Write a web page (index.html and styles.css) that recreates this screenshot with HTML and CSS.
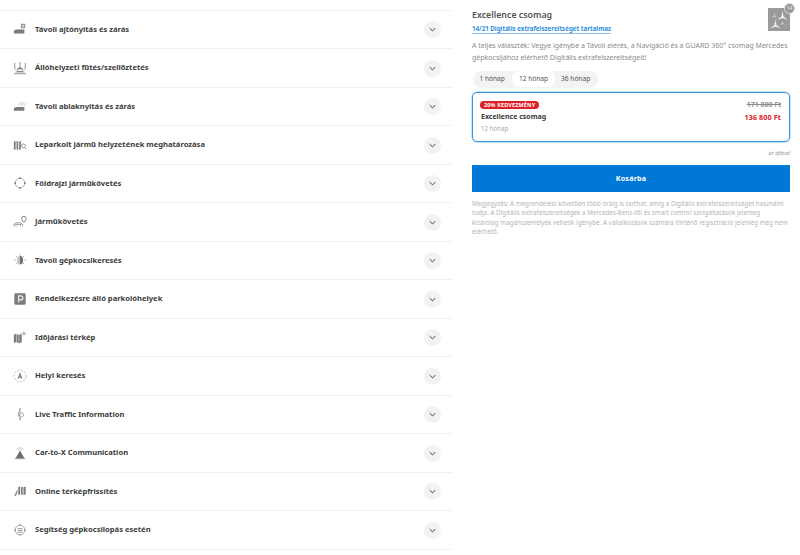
FILE: index.html
```html
<!DOCTYPE html>
<html lang="hu">
<head>
<meta charset="utf-8">
<title>Excellence csomag</title>
<link rel="stylesheet" href="styles.css">
</head>
<body>
<svg class="defs" width="0" height="0">
  <symbol id="chev" viewBox="0 0 10 6"><path d="M1 1l4 4 4-4" fill="none" stroke="#333" stroke-width="1.3"/></symbol>
  <symbol id="i1" viewBox="0 0 16 16"><path d="M1 13.500V10.500C1 9.500 2 9 4 8.500H13V13H2z" fill="#666"/><rect x="9" y="2" width="5" height="5" fill="#888"/><rect x="10.500" y="3.500" width="2" height="2" fill="#ddd"/></symbol>
  <symbol id="i2" viewBox="0 0 16 16"><g fill="none" stroke="#666" stroke-width=".9"><path d="M2 2v8M8 1v6M14 2v8M1 14.500h14M3 12.500h10M5 9h6v3H5z"/></g><path d="M5 9l2-2h2l2 2z" fill="#666"/></symbol>
  <symbol id="i3" viewBox="0 0 16 16"><path d="M1 14v-3c0-1 1-1.500 3-2h9v4.500H2z" fill="#666"/><path d="M6 7l5-4M9 8l4-4M12 8l3-3" stroke="#aaa" fill="none"/></symbol>
  <symbol id="i4" viewBox="0 0 16 16"><path d="M1 4l2-.5V13l-2 .5zM4 3.500l2 .5v9.500l-2-.5zM7 4l2-.5V13l-2 .5z" fill="#666"/><circle cx="12" cy="9" r="2.200" fill="none" stroke="#777"/><path d="M13.500 11l2 2" stroke="#777"/></symbol>
  <symbol id="i5" viewBox="0 0 16 16"><circle cx="8" cy="8" r="5.500" fill="none" stroke="#999"/><g fill="#555"><circle cx="8" cy="2.500" r="1"/><circle cx="8" cy="13.500" r="1"/><circle cx="2.500" cy="8" r="1"/><circle cx="13.500" cy="8" r="1"/></g></symbol>
  <symbol id="i6" viewBox="0 0 16 16"><path d="M1 13v-2l2-2h6l2 2v2M3 13h1M8 13h1M2 11h8" fill="none" stroke="#777"/><path d="M12.500 1.500a2.500 2.500 0 0 1 2.500 2.500c0 2-2.500 4.500-2.500 4.500S10 6 10 4a2.500 2.500 0 0 1 2.500-2.500z" fill="none" stroke="#666" stroke-width="1.100"/></symbol>
  <symbol id="i7" viewBox="0 0 16 16"><path d="M8 3.500a3.500 5 0 0 1 3.500 5c0 3-1.500 4.500-3.500 4.500z" fill="#555"/><path d="M8 3.500a3.500 5 0 0 0-3.500 5c0 3 1.500 4.500 3.500 4.500" fill="#bbb"/><path d="M8 1v2M1 8h2.500M13 8h2.500M3 3l2 2M13 3l-2 2M3 13l2-2M13 13l-2-2" stroke="#999"/></symbol>
  <symbol id="i8" viewBox="0 0 16 16"><rect x="1.500" y="1.500" width="13" height="13" rx="1.500" fill="#666"/><path d="M6.500 12V4.500H9a2 2 0 0 1 0 4.500H6.500" fill="none" stroke="#eee" stroke-width="1.300"/></symbol>
  <symbol id="i9" viewBox="0 0 16 16"><path d="M1 5l2.500-.5V14L1 14.500zM4 4.500l2.500 1V15L4 14zM7 5.500l3-1V14l-3 1z" fill="#666"/><circle cx="12.500" cy="4" r="1.500" fill="#999"/><path d="M12.500 .5v1.500M12.500 6v1.500M9 4h1.500M14.500 4H16M10 1.500l1 1M15 1.500l-1 1M10 6.500l1-1M15 6.500l-1-1" stroke="#bbb" stroke-width=".7"/></symbol>
  <symbol id="i10" viewBox="0 0 16 16"><circle cx="8" cy="8" r="6.800" fill="none" stroke="#aaa" stroke-dasharray="2.500 1.500"/><path d="M8 3.500l3 8-3-1.500-3 1.500z" fill="#777"/></symbol>
  <symbol id="i11" viewBox="0 0 16 16"><path d="M8.500 1c-.5 3-2.500 5-2.500 8a3 3 0 0 0 5 2 2.500 2.500 0 0 0-3-4c-1.500.8-1 3 .5 3" fill="none" stroke="#888" stroke-width="1"/><path d="M8 1v14" stroke="#888" stroke-width=".8"/><path d="M7 13l2 2" stroke="#666"/></symbol>
  <symbol id="i12" viewBox="0 0 16 16"><path d="M8 5l5 9H3z" fill="#555"/><path d="M4 4a5 5 0 0 1 8 0M6 5a2.500 2.500 0 0 1 4 0" stroke="#aaa" fill="none" stroke-width=".8"/><rect x="2" y="14" width="12" height="1" fill="#777"/></symbol>
  <symbol id="i13" viewBox="0 0 16 16"><path d="M6 3.500l2-.5v9l-2 .5zM9 3l2 .5v9l-2-.5zM12 3.500l2.500-.5v9l-2.500.5z" fill="#666"/><path d="M5 6l-2 4-1.500 3.500L3 14l2-4z" fill="#777"/></symbol>
  <symbol id="i14" viewBox="0 0 16 16"><circle cx="8" cy="8" r="5.500" fill="none" stroke="#888"/><path d="M1 8h2M13 8h2M8 1v1.500M8 13.500V15M5 6.500h6M6 8.500h5M5 10.500h6" stroke="#777" fill="none"/></symbol>
  <symbol id="star" viewBox="0 0 22 23">
    <path d="M14.500 3L15.500 8.500 20 12 14.500 10 9 12 13.500 8.500z" fill="#f4f4f4"/>
    <path d="M7.500 11.500L8.500 17 13 20.500 7.500 18.500 2 20.500 6.500 17z" fill="#f4f4f4"/>
    <path d="M6.500 5L7 7.800 9.300 9.500 6.500 8.500 3.700 9.500 6 7.800z" fill="#ddd"/>
    <path d="M14.500 12.500L15 15.300 17.300 17 14.500 16 11.700 17 14 15.300z" fill="#ddd"/>
  </symbol>
</svg>
<main class="page">
  <ul class="list">
    <li class="row"><svg class="ico"><use href="#i1"/></svg><span class="label">Távoli ajtónyitás és zárás</span><span class="toggle"><svg class="chev"><use href="#chev"/></svg></span></li>
    <li class="row"><svg class="ico"><use href="#i2"/></svg><span class="label">Állóhelyzeti fűtés/szellőztetés</span><span class="toggle"><svg class="chev"><use href="#chev"/></svg></span></li>
    <li class="row"><svg class="ico"><use href="#i3"/></svg><span class="label">Távoli ablaknyitás és zárás</span><span class="toggle"><svg class="chev"><use href="#chev"/></svg></span></li>
    <li class="row"><svg class="ico"><use href="#i4"/></svg><span class="label">Leparkolt jármű helyzetének meghatározása</span><span class="toggle"><svg class="chev"><use href="#chev"/></svg></span></li>
    <li class="row"><svg class="ico"><use href="#i5"/></svg><span class="label">Földrajzi járműkövetés</span><span class="toggle"><svg class="chev"><use href="#chev"/></svg></span></li>
    <li class="row"><svg class="ico"><use href="#i6"/></svg><span class="label">Járműkövetés</span><span class="toggle"><svg class="chev"><use href="#chev"/></svg></span></li>
    <li class="row"><svg class="ico"><use href="#i7"/></svg><span class="label">Távoli gépkocsikeresés</span><span class="toggle"><svg class="chev"><use href="#chev"/></svg></span></li>
    <li class="row"><svg class="ico"><use href="#i8"/></svg><span class="label">Rendelkezésre álló parkolóhelyek</span><span class="toggle"><svg class="chev"><use href="#chev"/></svg></span></li>
    <li class="row"><svg class="ico"><use href="#i9"/></svg><span class="label">Időjárási térkép</span><span class="toggle"><svg class="chev"><use href="#chev"/></svg></span></li>
    <li class="row"><svg class="ico"><use href="#i10"/></svg><span class="label">Helyi keresés</span><span class="toggle"><svg class="chev"><use href="#chev"/></svg></span></li>
    <li class="row"><svg class="ico"><use href="#i11"/></svg><span class="label">Live Traffic Information</span><span class="toggle"><svg class="chev"><use href="#chev"/></svg></span></li>
    <li class="row"><svg class="ico"><use href="#i12"/></svg><span class="label">Car-to-X Communication</span><span class="toggle"><svg class="chev"><use href="#chev"/></svg></span></li>
    <li class="row"><svg class="ico"><use href="#i13"/></svg><span class="label">Online térképfrissítés</span><span class="toggle"><svg class="chev"><use href="#chev"/></svg></span></li>
    <li class="row"><svg class="ico"><use href="#i14"/></svg><span class="label">Segítség gépkocsilopás esetén</span><span class="toggle"><svg class="chev"><use href="#chev"/></svg></span></li>
  </ul>
  <aside class="side">
    <header class="head">
      <div>
        <h1 class="title">Excellence csomag</h1>
        <a class="link">14/21 Digitális extrafelszereltséget tartalmaz</a>
      </div>
      <div class="logo"><svg class="star"><use href="#star"/></svg><span class="count">14</span></div>
    </header>
    <p class="intro">A teljes választék: Vegye igénybe a Távoli elérés, a Navigáció és a GUARD 360° csomag Mercedes gépkocsijához elérhető Digitális extrafelszereltségeit!</p>
    <div class="tabs"><span class="tab">1 hónap</span><span class="tab on">12 hónap</span><span class="tab">36 hónap</span></div>
    <section class="card">
      <div class="card-row"><span class="badge">20% KEDVEZMÉNY</span><s class="old">171 000 Ft</s></div>
      <div class="card-row"><strong class="name">Excellence csomag</strong><strong class="price">136 800 Ft</strong></div>
      <div class="term">12 hónap</div>
    </section>
    <div class="vat">ár áfával</div>
    <button class="cart">Kosárba</button>
    <p class="note">Megjegyzés: A megrendelést követően több óráig is tarthat, amíg a Digitális extrafelszereltséget használni<br>tudja. A Digitális extrafelszereltségek a Mercedes-Benz-től és smart control szolgáltatások jelenleg<br>kizárólag magánszemélyek vehetik igénybe. A vállalkozások számára történő regisztráció jelenleg még nem<br>elérhető.</p>
  </aside>
</main>
</body>
</html>
```
FILE: styles.css
```css
* { box-sizing: border-box; }
html, body { margin: 0; padding: 0; background: #fff; overflow: hidden; }
body { font-family: "Noto Sans", "Liberation Sans", sans-serif; color: #333; height: 555px; }
.defs { display: block; height: 0; }
.page { display: flex; align-items: flex-start; gap: 20px; padding: 9.9px 10px 0 0; }
.list { list-style: none; margin: 0; padding: 0; width: 452px; flex: none; border-bottom: 1px solid #f1f1f1; }
.row { display: flex; align-items: center; height: 38.5px; border-top: 1px solid #f1f1f1; padding: 0 11px 0 13px; }
.ico { width: 14px; height: 14px; flex: none; margin-right: 8px; margin-top: -1px; opacity: .85; }
.label { flex: 1; font-size: 7.6px; font-weight: 700; color: #3c3c3c; margin-top: -2px; }
.toggle { width: 17px; height: 17px; border-radius: 50%; background: #f2f2f2; display: flex; align-items: center; justify-content: center; }
.chev { width: 7px; height: 5px; }
.side { flex: 1; min-width: 0; }
.head { display: flex; justify-content: space-between; height: 30px; }
.title { margin: 0; font-size: 8.8px; line-height: 11px; font-weight: 600; color: #555; }
.link { display: block; width: fit-content; margin-top: 3px; font-size: 6.2px; line-height: 9px; font-weight: 700; color: #2f8fdc; border-bottom: 1px solid #8cc3ef; }
.logo { position: relative; width: 22px; height: 23px; background: #9a9a9a; margin-top: -2px; }
.star { width: 22px; height: 23px; display: block; }
.count { position: absolute; top: -5px; right: -5px; width: 11px; height: 11px; border-radius: 50%; background: #999; border: 1px solid #ddd; color: #eee; font-size: 5px; line-height: 9px; text-align: center; }
.intro { margin: 0 0 7px; font-size: 7px; line-height: 12px; color: #8a8a8a; }
.tabs { display: flex; width: fit-content; align-items: center; height: 17px; margin-left: 1px; background: #f3f3f3; border-radius: 9px; font-size: 6.6px; color: #555; padding-right: 1px; }
.tab { padding: 0 6.5px; line-height: 16px; border-radius: 8px; }
.tab:first-child { padding-right: 7.5px; }
.on { background: #fff; }
.card { margin-top: 4px; height: 50px; border: 1px solid #3a94dc; box-shadow: 0 0 0 .5px #8fc5ef; border-radius: 5px; padding: 6px 8px 0; }
.card-row { display: flex; justify-content: space-between; align-items: center; height: 12px; }
.badge { background: #dc2027; color: #fff; font-size: 5.4px; font-weight: 700; padding: 0 4px; line-height: 8.5px; border-radius: 4px; letter-spacing: .2px; margin-left: -1px; }
.old { font-size: 7px; color: #888; font-weight: 600; }
.name { font-size: 7px; color: #3c3c3c; }
.price { font-size: 7.2px; color: #dc2027; letter-spacing: .1px; }
.term { font-size: 6.2px; color: #aaa; line-height: 11px; }
.vat { text-align: right; font-size: 5.4px; font-style: italic; color: #999; margin-top: 7px; line-height: 8px; }
.cart { display: block; width: 100%; height: 27px; margin-top: 8px; border: 0; background: #0078d6; color: #fff; font: 700 7.2px "Noto Sans", sans-serif; letter-spacing: .2px; }
.note { margin: 7px 0 0; font-size: 6.2px; line-height: 9.4px; color: #b4b4b4; letter-spacing: .04px; white-space: nowrap; }
```
